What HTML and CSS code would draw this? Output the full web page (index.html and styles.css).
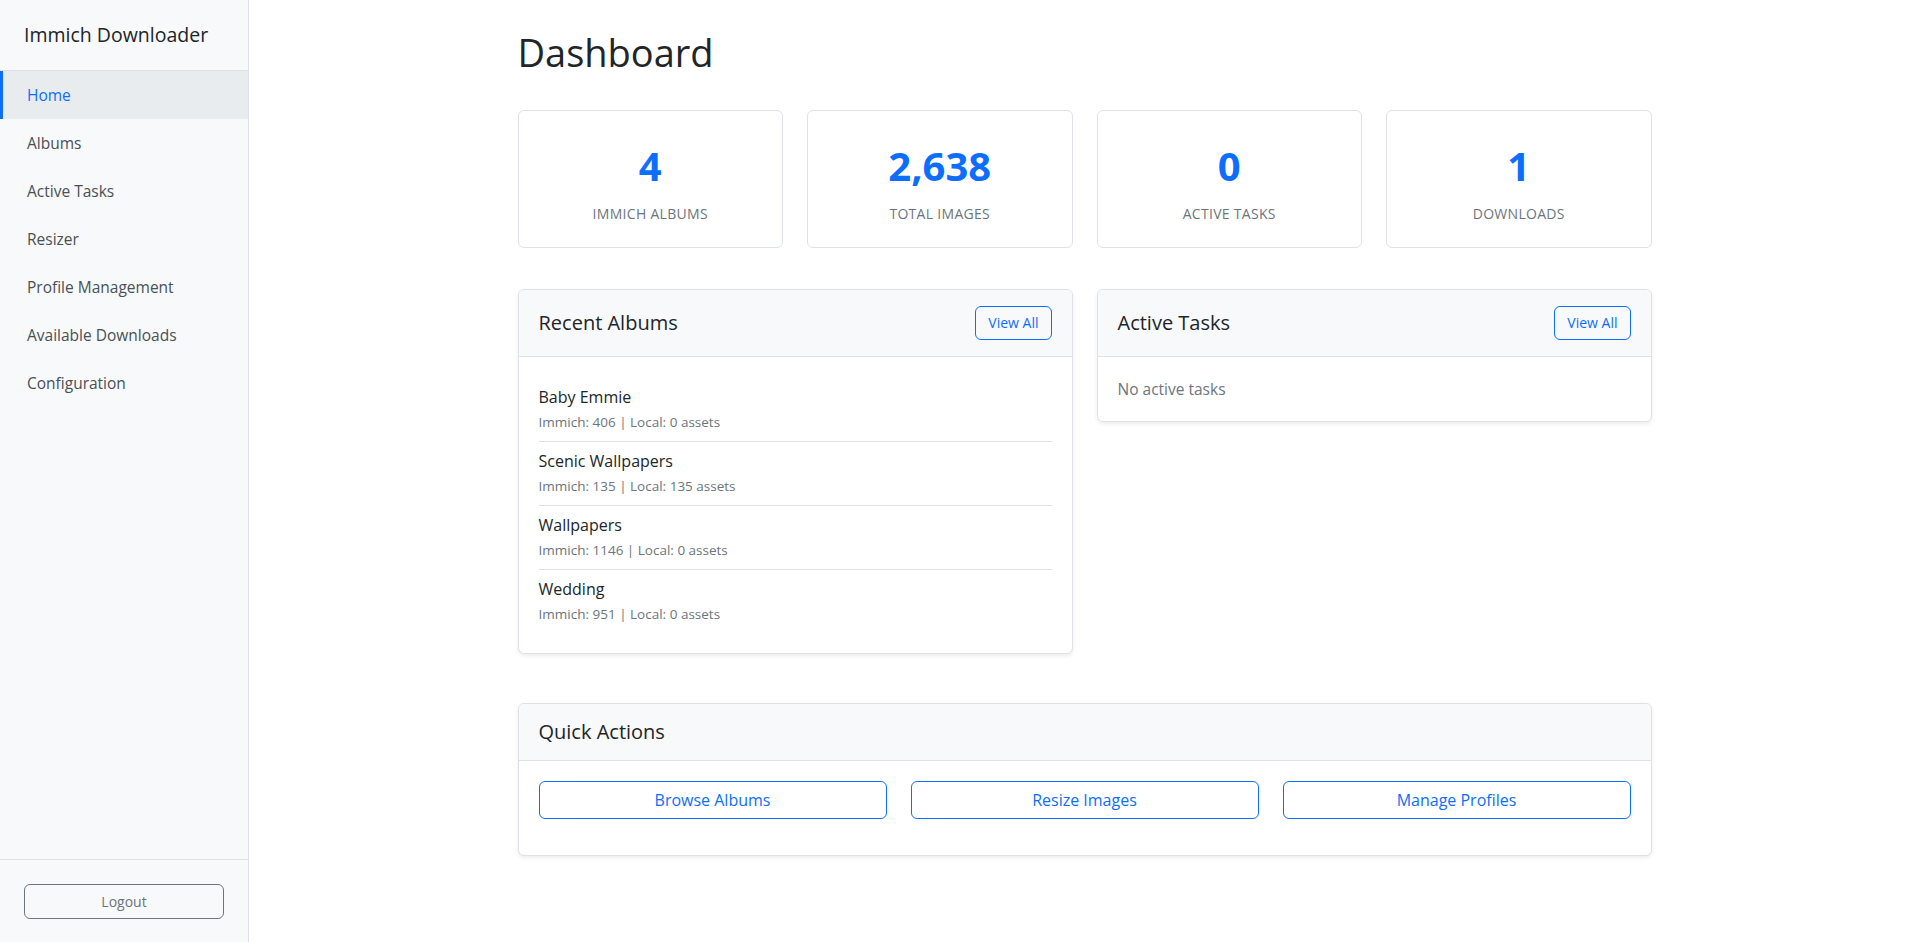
FILE: index.html
```html
<!DOCTYPE html>
<html lang="en">
<head>
<meta charset="utf-8">
<title>Immich Downloader - Dashboard</title>
<link rel="stylesheet" href="styles.css">
</head>
<body>
<aside class="sidebar">
  <div class="brand">Immich Downloader</div>
  <nav class="nav">
    <a class="nav-link active" href="#">Home</a>
    <a class="nav-link" href="#">Albums</a>
    <a class="nav-link" href="#">Active Tasks</a>
    <a class="nav-link" href="#">Resizer</a>
    <a class="nav-link" href="#">Profile Management</a>
    <a class="nav-link" href="#">Available Downloads</a>
    <a class="nav-link" href="#">Configuration</a>
  </nav>
  <div class="sidebar-footer">
    <button class="btn-logout">Logout</button>
  </div>
</aside>
<main class="main">
  <div class="container">
    <h1 class="page-title">Dashboard</h1>
    <section class="stats">
      <div class="stat-card"><div class="stat-value">4</div><div class="stat-label">Immich Albums</div></div>
      <div class="stat-card"><div class="stat-value">2,638</div><div class="stat-label">Total Images</div></div>
      <div class="stat-card"><div class="stat-value">0</div><div class="stat-label">Active Tasks</div></div>
      <div class="stat-card"><div class="stat-value">1</div><div class="stat-label">Downloads</div></div>
    </section>
    <section class="two-col">
      <div class="card">
        <div class="card-header">
          <h5 class="card-title">Recent Albums</h5>
          <a class="btn-sm" href="#">View All</a>
        </div>
        <div class="card-body albums-body">
          <ul class="album-list">
            <li class="album-item"><div class="album-name">Baby Emmie</div><div class="album-meta">Immich: 406 | Local: 0 assets</div></li>
            <li class="album-item"><div class="album-name">Scenic Wallpapers</div><div class="album-meta">Immich: 135 | Local: 135 assets</div></li>
            <li class="album-item"><div class="album-name">Wallpapers</div><div class="album-meta">Immich: 1146 | Local: 0 assets</div></li>
            <li class="album-item"><div class="album-name">Wedding</div><div class="album-meta">Immich: 951 | Local: 0 assets</div></li>
          </ul>
        </div>
      </div>
      <div class="card">
        <div class="card-header">
          <h5 class="card-title">Active Tasks</h5>
          <a class="btn-sm" href="#">View All</a>
        </div>
        <div class="card-body">
          <p class="muted">No active tasks</p>
        </div>
      </div>
    </section>
    <section class="card quick">
      <div class="card-header">
        <h5 class="card-title">Quick Actions</h5>
      </div>
      <div class="card-body">
        <div class="actions">
          <a class="btn-outline" href="#">Browse Albums</a>
          <a class="btn-outline" href="#">Resize Images</a>
          <a class="btn-outline" href="#">Manage Profiles</a>
        </div>
      </div>
    </section>
  </div>
</main>
</body>
</html>
```

FILE: styles.css
```css
* { box-sizing: border-box; }

html, body {
  margin: 0;
  height: 100%;
}

body {
  display: flex;
  font-family: "Open Sans", "Noto Sans", sans-serif;
  font-size: 16px;
  line-height: 1.5;
  color: #212529;
  background: #ffffff;
}

a { text-decoration: none; }

.sidebar {
  width: 249px;
  flex: 0 0 249px;
  height: 100vh;
  background: #f8f9fa;
  border-right: 1px solid #dee2e6;
  display: flex;
  flex-direction: column;
}

.brand {
  padding: 23px 24px;
  font-size: 19.5px;
  line-height: 24px;
  border-bottom: 1px solid #dee2e6;
  color: #212529;
}

.nav {
  flex: 1;
  display: flex;
  flex-direction: column;
}

.nav-link {
  display: block;
  padding: 12px 24px;
  border-left: 3px solid transparent;
  font-size: 15.5px;
  line-height: 24px;
  color: #495057;
}

.nav-link.active {
  background: #e9ecef;
  color: #0d6efd;
  border-left-color: #0d6efd;
}

.sidebar-footer {
  border-top: 1px solid #dee2e6;
  padding: 24px 24px 23px;
}

.btn-logout {
  width: 100%;
  height: 35px;
  background: transparent;
  border: 1px solid #6c757d;
  border-radius: 6px;
  color: #6c757d;
  font-family: inherit;
  font-size: 14px;
}

.main {
  flex: 1;
  height: 100vh;
  overflow: auto;
}

.container {
  max-width: 1134px;
  margin: 0 auto;
  padding-top: 28px;
}

.page-title {
  margin: 0 0 34px;
  font-size: 38px;
  line-height: 48px;
  font-weight: 400;
}

.stats {
  display: grid;
  grid-template-columns: repeat(4, 1fr);
  gap: 24px;
}

.stat-card {
  border: 1px solid #dee2e6;
  border-radius: 6px;
  padding: 31px 16px 23px;
  text-align: center;
  height: 138px;
}

.stat-value {
  font-size: 40px;
  line-height: 48px;
  font-weight: 700;
  color: #0d6efd;
  margin-bottom: 13px;
}

.stat-label {
  font-size: 14px;
  line-height: 21px;
  color: #6c757d;
  text-transform: uppercase;
  letter-spacing: 0.3px;
}

.two-col {
  display: grid;
  grid-template-columns: 1fr 1fr;
  gap: 24px;
  align-items: start;
  margin-top: 41px;
}

.card {
  border: 1px solid #dee2e6;
  border-radius: 6px;
  box-shadow: 0 2px 4px rgba(0, 0, 0, 0.075);
  background: #fff;
  overflow: hidden;
}

.card-header {
  display: flex;
  align-items: center;
  justify-content: space-between;
  padding: 16px 20px;
  background: #f8f9fa;
  border-bottom: 1px solid #dee2e6;
}

.card-title {
  margin: 0;
  font-size: 20px;
  line-height: 24px;
  font-weight: 400;
}

.btn-sm {
  display: inline-block;
  height: 34px;
  padding: 5px 12px;
  font-size: 14px;
  line-height: 22px;
  color: #0d6efd;
  border: 1px solid #0d6efd;
  border-radius: 6px;
}

.card-body {
  padding: 20px;
}

.albums-body {
  padding: 21px 20px 20px;
}

.album-list {
  list-style: none;
  margin: 0;
  padding: 0;
}

.album-item {
  padding: 9px 0 8px;
  border-bottom: 1px solid #dee2e6;
}

.album-item:last-child {
  border-bottom: none;
}

.album-name {
  font-size: 16px;
  line-height: 20px;
  margin-bottom: 5px;
}

.album-meta {
  font-size: 13.5px;
  line-height: 21px;
  color: #6c757d;
}

.muted {
  margin: 0;
  color: #6c757d;
  font-size: 15.5px;
  line-height: 24px;
}

.quick {
  margin-top: 49px;
}

.quick .card-body {
  padding-bottom: 36px;
}

.actions {
  display: grid;
  grid-template-columns: repeat(3, 1fr);
  gap: 24px;
}

.btn-outline {
  display: block;
  height: 38px;
  padding: 6px 12px;
  line-height: 24px;
  text-align: center;
  color: #0d6efd;
  border: 1px solid #0d6efd;
  border-radius: 6px;
  font-size: 16px;
}
```
